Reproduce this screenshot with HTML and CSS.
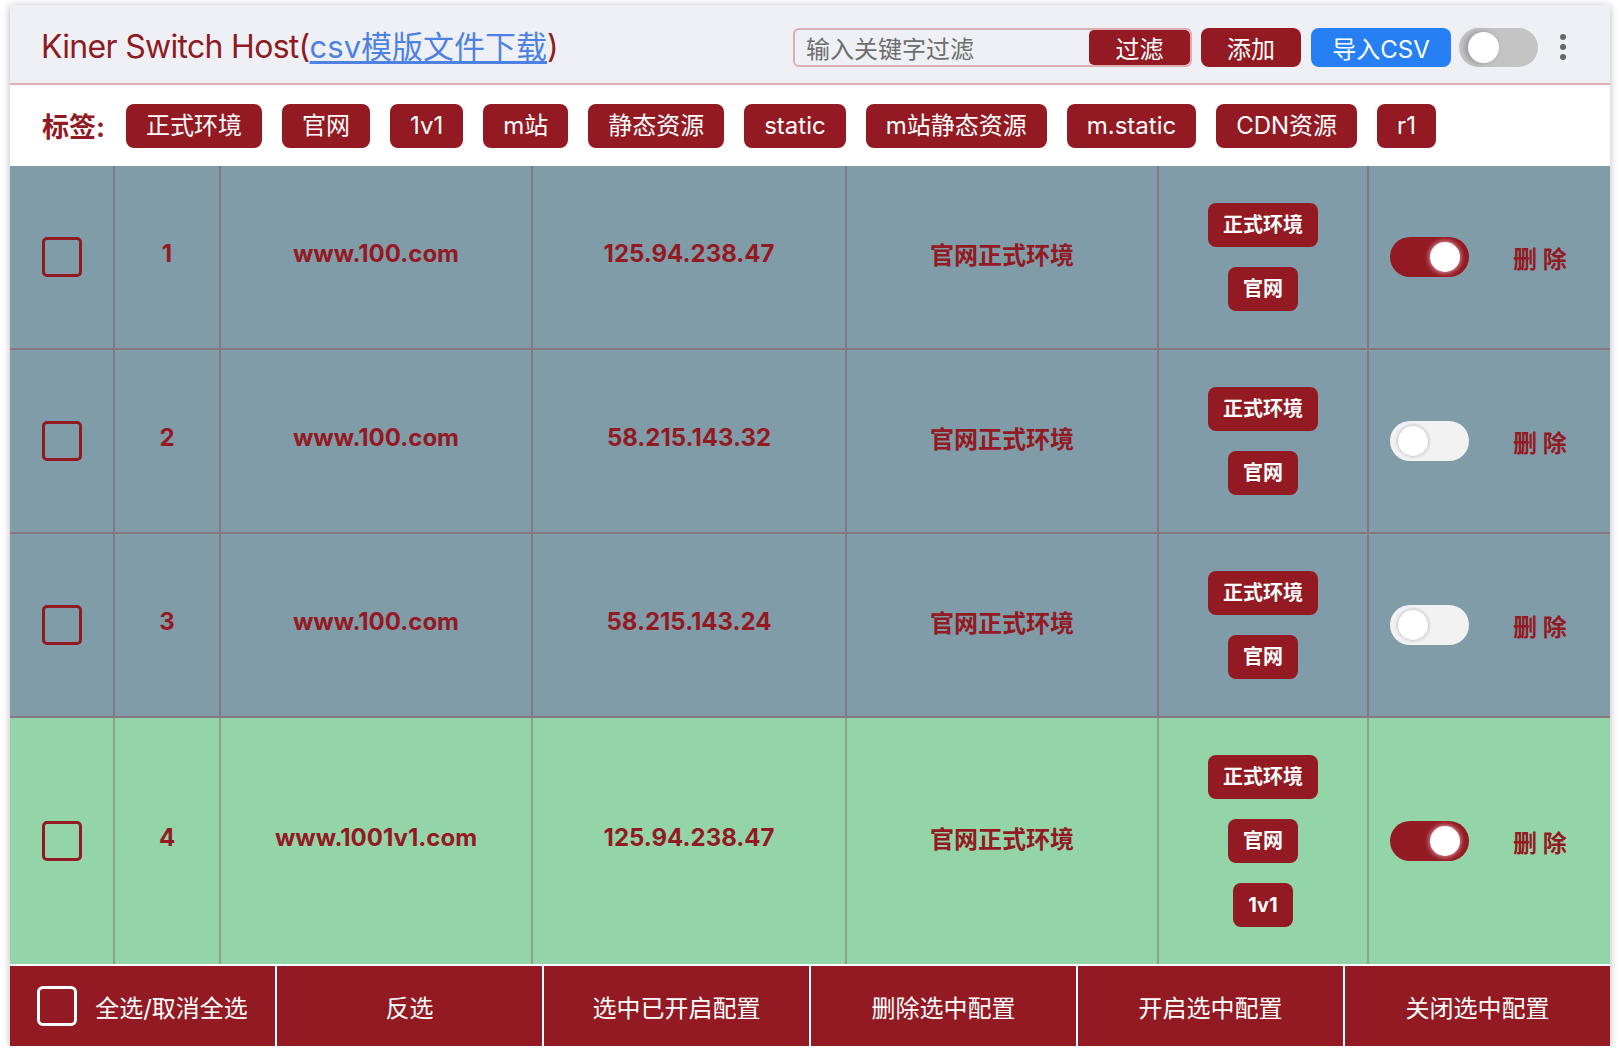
FILE: index.html
```html
<!DOCTYPE html>
<html lang="zh-CN">
<head>
<meta charset="utf-8">
<title>Kiner Switch Host</title>
<link rel="stylesheet" href="styles.css">
</head>
<body>
<div class="app">
  <header class="topbar">
    <h1 class="title"><span class="title-main">Kiner Switch Host(</span><a class="title-link" href="#">csv模版文件下载</a>)</h1>
    <div class="actions">
      <div class="search">
        <input class="search-input" type="text" placeholder="输入关键字过滤">
        <button class="btn btn-filter">过滤</button>
      </div>
      <button class="btn btn-add">添加</button>
      <button class="btn btn-import">导入CSV</button>
      <span class="hswitch"><span class="hknob"></span></span>
      <span class="kebab"><i></i><i></i><i></i></span>
    </div>
  </header>

  <div class="tagbar">
    <span class="tagbar-label">标签:</span>
    <span class="tag">正式环境</span>
    <span class="tag">官网</span>
    <span class="tag">1v1</span>
    <span class="tag">m站</span>
    <span class="tag">静态资源</span>
    <span class="tag">static</span>
    <span class="tag">m站静态资源</span>
    <span class="tag">m.static</span>
    <span class="tag">CDN资源</span>
    <span class="tag">r1</span>
  </div>

  <div class="table">
    <div class="row row-off">
      <div class="cell"><span class="check"></span></div>
      <div class="cell txt">1</div>
      <div class="cell txt">www.100.com</div>
      <div class="cell txt">125.94.238.47</div>
      <div class="cell txt">官网正式环境</div>
      <div class="cell tags"><span class="mini-tag">正式环境</span><span class="mini-tag">官网</span></div>
      <div class="cell ops"><span class="rswitch on"><span class="knob"></span></span><span class="del">删 除</span></div>
    </div>
    <div class="row row-off">
      <div class="cell"><span class="check"></span></div>
      <div class="cell txt">2</div>
      <div class="cell txt">www.100.com</div>
      <div class="cell txt">58.215.143.32</div>
      <div class="cell txt">官网正式环境</div>
      <div class="cell tags"><span class="mini-tag">正式环境</span><span class="mini-tag">官网</span></div>
      <div class="cell ops"><span class="rswitch off"><span class="knob"></span></span><span class="del">删 除</span></div>
    </div>
    <div class="row row-off">
      <div class="cell"><span class="check"></span></div>
      <div class="cell txt">3</div>
      <div class="cell txt">www.100.com</div>
      <div class="cell txt">58.215.143.24</div>
      <div class="cell txt">官网正式环境</div>
      <div class="cell tags"><span class="mini-tag">正式环境</span><span class="mini-tag">官网</span></div>
      <div class="cell ops"><span class="rswitch off"><span class="knob"></span></span><span class="del">删 除</span></div>
    </div>
    <div class="row row-hl">
      <div class="cell"><span class="check"></span></div>
      <div class="cell txt">4</div>
      <div class="cell txt">www.1001v1.com</div>
      <div class="cell txt">125.94.238.47</div>
      <div class="cell txt">官网正式环境</div>
      <div class="cell tags"><span class="mini-tag">正式环境</span><span class="mini-tag">官网</span><span class="mini-tag">1v1</span></div>
      <div class="cell ops"><span class="rswitch on"><span class="knob"></span></span><span class="del">删 除</span></div>
    </div>
  </div>

  <div class="footer">
    <div class="fcell"><span class="fcheck"></span><span>全选/取消全选</span></div>
    <div class="fcell">反选</div>
    <div class="fcell">选中已开启配置</div>
    <div class="fcell">删除选中配置</div>
    <div class="fcell">开启选中配置</div>
    <div class="fcell">关闭选中配置</div>
  </div>
</div>
</body>
</html>
```
FILE: styles.css
```css
* { box-sizing: border-box; }

body {
  margin: 0;
  background: #ffffff;
  font-family: "Inter", "Noto Sans CJK SC", sans-serif;
}

.app {
  width: 1600px;
  margin: 5px 10px 0;
  box-shadow: 0 1px 8px rgba(0, 0, 0, 0.28);
}

/* ---------- header ---------- */
.topbar {
  height: 80px;
  display: flex;
  align-items: center;
  padding: 6px 44px 0 31px;
  background: #eff0f5;
  border-bottom: 2px solid #dcb0b6;
}

.title {
  margin: 0 0 5px;
  font-size: 32px;
  font-weight: 400;
  color: #8e1b22;
  white-space: nowrap;
}

.title-main { letter-spacing: -0.7px; }

.title-link {
  font-size: 31px;
  color: #4d82e4;
  text-decoration: underline;
  text-underline-offset: 3px;
}

.actions {
  margin-left: auto;
  display: flex;
  align-items: center;
}

.search {
  width: 399px;
  height: 39px;
  display: flex;
  border: 2px solid #dcaeb4;
  border-radius: 6px;
  overflow: hidden;
  background: #eff0f5;
}

.search-input {
  flex: 1;
  min-width: 0;
  border: 0;
  outline: none;
  background: transparent;
  padding: 0 0 0 11px;
  font-family: "Noto Sans CJK SC", sans-serif;
  font-size: 24px;
  color: #333;
}

.search-input::placeholder { color: #6e6e6e; }

.btn {
  height: 39px;
  border: 0;
  border-radius: 8px;
  padding: 0;
  color: #ffffff;
  font-family: inherit;
  font-size: 24px;
  display: flex;
  align-items: center;
  justify-content: center;
}

.btn-filter {
  width: 101px;
  height: 100%;
  border-radius: 5px;
  background: #931a22;
}

.btn-add {
  width: 100px;
  margin-left: 9px;
  background: #931a22;
}

.btn-import {
  width: 140px;
  margin-left: 10px;
  background: #2680f4;
}

.hswitch {
  position: relative;
  width: 79px;
  height: 39px;
  margin-left: 8px;
  border-radius: 20px;
  background: #c4c4c4;
}

.hknob {
  position: absolute;
  left: 9px;
  top: 4px;
  width: 31px;
  height: 31px;
  border-radius: 50%;
  background: #ffffff;
  box-shadow: -3px 0 6px rgba(0, 0, 0, 0.25);
}

.kebab {
  margin-left: 22px;
  display: flex;
  flex-direction: column;
  gap: 4px;
}

.kebab i {
  display: block;
  width: 6px;
  height: 6px;
  border-radius: 50%;
  background: #666666;
}

/* ---------- tag bar ---------- */
.tagbar {
  height: 81px;
  display: flex;
  align-items: center;
  gap: 20px;
  padding-left: 32px;
  background: #ffffff;
}

.tagbar-label {
  margin-right: 1px;
  font-size: 27px;
  font-weight: 700;
  color: #931a22;
}

.tag {
  height: 44px;
  line-height: 44px;
  padding: 0 20px;
  border-radius: 8px;
  background: #931a22;
  color: #ffffff;
  font-size: 24px;
}

/* ---------- table ---------- */
.row {
  display: grid;
  grid-template-columns: 105px 106px 312px 314px 312px 210px 241px;
}

.row-off { background: #809ca9; }
.row-hl { background: #93d5a9; }

.cell {
  display: flex;
  align-items: center;
  justify-content: center;
  padding: 37px 0;
  border-right: 2px solid rgba(148, 27, 34, 0.28);
  border-bottom: 2px solid rgba(148, 27, 34, 0.28);
  color: #931a22;
  font-size: 24px;
  font-weight: 700;
}

.cell.txt { padding-bottom: 41px; padding-top: 33px; }

.row:last-child .cell { border-bottom: 0; }

.cell.ops {
  border-right: 0;
  justify-content: flex-start;
  padding-left: 21px;
  gap: 44px;
}

.check {
  width: 40px;
  height: 40px;
  border: 3px solid #931a22;
  border-radius: 5px;
}

.cell.tags {
  flex-direction: column;
  gap: 20px;
}

.mini-tag {
  height: 44px;
  line-height: 44px;
  padding: 0 15px;
  border-radius: 8px;
  background: #931a22;
  color: #ffffff;
  font-size: 20px;
  font-weight: 700;
}

.rswitch {
  position: relative;
  flex: none;
  width: 79px;
  height: 40px;
  border-radius: 20px;
}

.rswitch .knob {
  position: absolute;
  top: 5px;
  width: 30px;
  height: 30px;
  border-radius: 50%;
  background: #ffffff;
}

.rswitch.on { background: #931a22; }
.rswitch.on .knob {
  right: 9px;
  box-shadow: 0 0 5px 1px rgba(255, 210, 215, 0.7);
}

.rswitch.off { background: #f2f2f2; }
.rswitch.off .knob {
  left: 8px;
  box-shadow: 0 0 4px rgba(0, 0, 0, 0.3);
}

.del {
  font-size: 24px;
  font-weight: 700;
  color: #931a22;
}

/* ---------- footer ---------- */
.footer {
  display: flex;
  height: 82px;
  border-top: 2px solid #ffffff;
  background: #931a22;
}

.fcell {
  flex: 1;
  display: flex;
  align-items: center;
  justify-content: center;
  gap: 18px;
  color: #ffffff;
  font-size: 24px;
}

.fcell + .fcell { border-left: 2px solid #ffffff; }

.fcheck {
  width: 40px;
  height: 40px;
  border: 3px solid #ffffff;
  border-radius: 6px;
}
```
